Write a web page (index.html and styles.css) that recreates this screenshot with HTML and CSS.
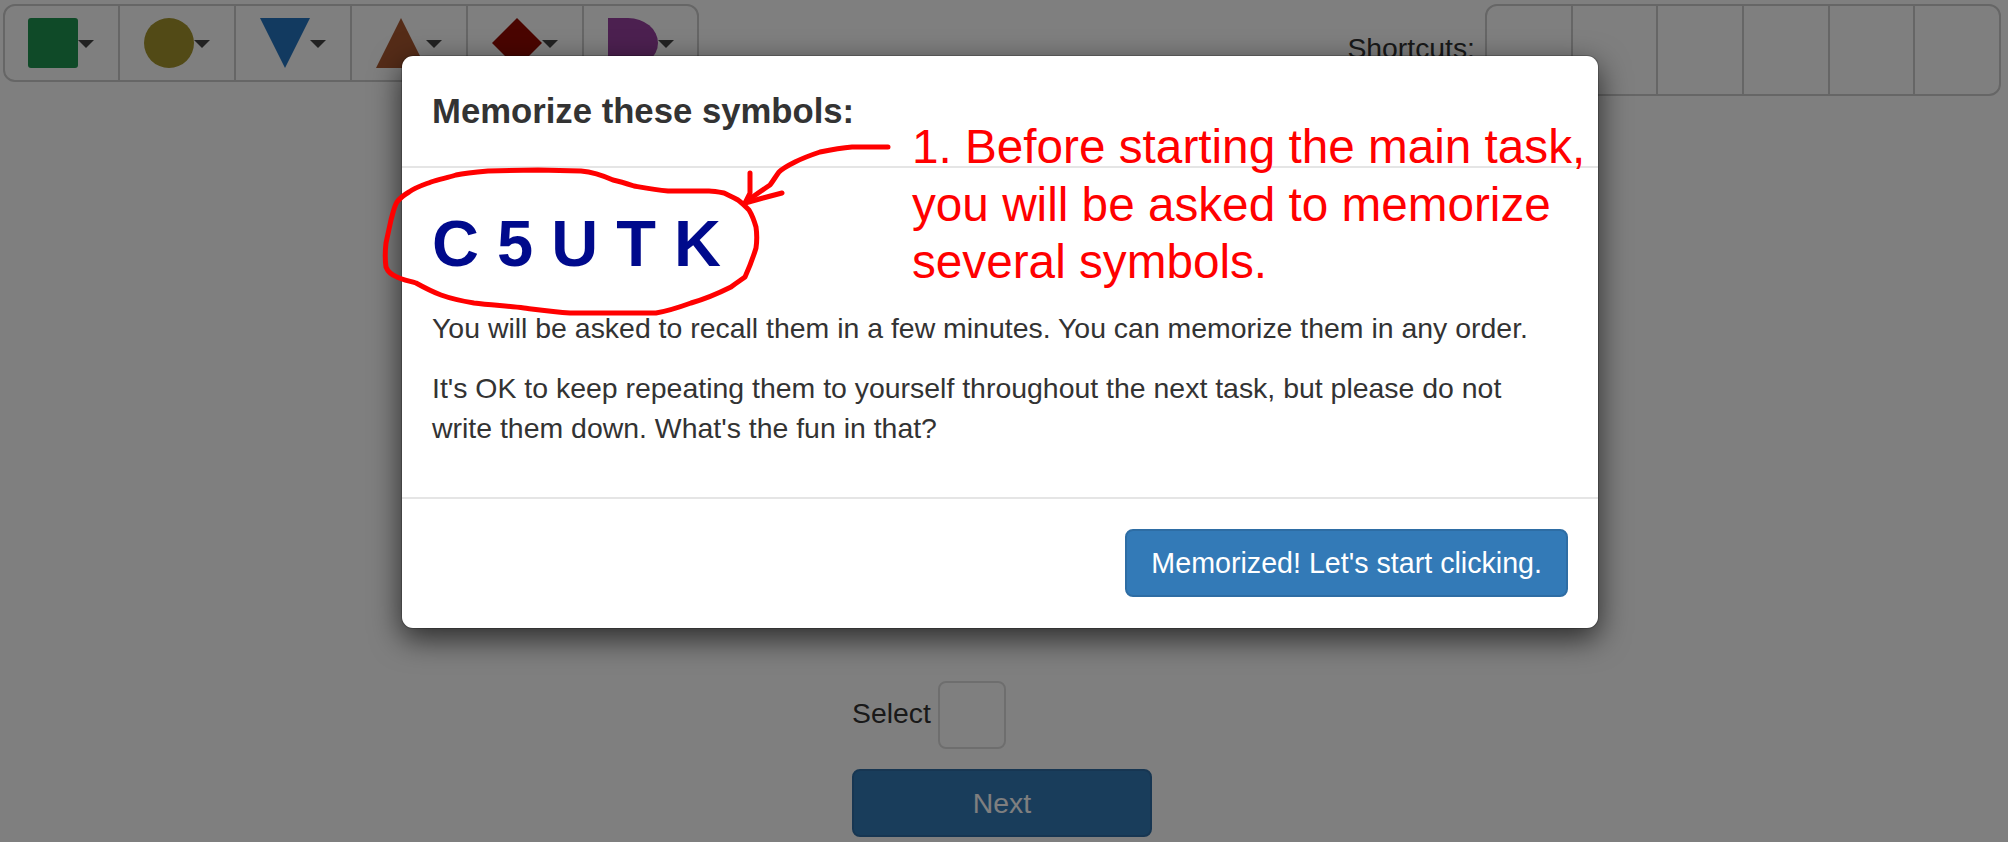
FILE: index.html
```html
<!DOCTYPE html>
<html lang="en">
<head>
<meta charset="utf-8">
<title>Memorize these symbols</title>
<link rel="stylesheet" href="styles.css">
</head>
<body>
<div class="page">
  <header class="top">
    <div class="toolbar">
      <div class="tool"><svg class="shape" viewBox="0 0 50 50"><rect width="50" height="50" rx="3" fill="#1e9450"/></svg><span class="caret"></span></div>
      <div class="tool"><svg class="shape" viewBox="0 0 50 50"><ellipse cx="25" cy="25" rx="25" ry="25" fill="#a4942c"/></svg><span class="caret"></span></div>
      <div class="tool"><svg class="shape" viewBox="0 0 50 50"><polygon points="0,0 50,0 25,50" fill="#2474c0"/></svg><span class="caret"></span></div>
      <div class="tool"><svg class="shape" viewBox="0 0 50 50"><polygon points="25,0 50,50 0,50" fill="#aa5830"/></svg><span class="caret"></span></div>
      <div class="tool"><svg class="shape" viewBox="0 0 50 50"><polygon points="25,0 50,25 25,50 0,25" fill="#940a00"/></svg><span class="caret"></span></div>
      <div class="tool"><svg class="shape" viewBox="0 0 50 50"><path d="M0 0H20A30 25 0 0 1 20 50H0Z" fill="#9840a0"/></svg><span class="caret"></span></div>
    </div>
    <div class="shortcuts">
      <span class="shortcuts-label">Shortcuts:</span>
      <div class="shortcut-box">
        <div class="shortcut"></div><div class="shortcut"></div><div class="shortcut"></div>
        <div class="shortcut"></div><div class="shortcut"></div><div class="shortcut"></div>
      </div>
    </div>
  </header>
  <main class="main">
    <div class="select-row"><span class="select-label">Select</span><div class="select-box"></div></div>
    <button class="btn btn-next" type="button">Next</button>
  </main>
</div>

<div class="backdrop"></div>

<section class="modal">
  <div class="modal-header"><h4 class="modal-title">Memorize these symbols:</h4></div>
  <div class="modal-body">
    <div class="symbols">C 5 U T K</div>
    <p>You will be asked to recall them in a few minutes. You can memorize them in any order.</p>
    <p>It's OK to keep repeating them to yourself throughout the next task, but please do not write them down. What's the fun in that?</p>
  </div>
  <div class="modal-footer"><button class="btn btn-primary" type="button">Memorized! Let's start clicking.</button></div>
</section>

<svg class="scribble" viewBox="0 0 2008 842" width="2008" height="842">
  <path d="M668 191C655 190 645 188 634 186C625 183 618 181 613 180C604 176 592 172 581 171L538 170L488 171C476 172 465 173 456 175C447 178 439 179 431 182C423 185 416 187 409 192C404 195 400 198 397 202C394 207 393 213 391 220L386 243C385 252 385 260 386 267C388 272 392 275 397 277C403 280 410 281 416 283C425 288 433 292 441 295C452 299 462 301 474 303C490 305 507 306 524 308C540 310 555 312 570 313L656 313C668 311 680 307 691 303C705 299 719 293 731 287C736 283 741 280 745 277C749 268 753 258 756 248C757 241 757 234 756 227C754 220 752 215 749 210C745 206 742 203 738 200C733 197 728 195 724 193C719 192 714 191 709 191Z"/>
  <path d="M888 147L852 147C841 148 830 150 820 152C811 155 803 158 795 162C789 165 783 168 779 172C776 176 773 181 770 185C761 191 752 197 745 203"/>
  <path d="M750 173L750 193L745 203L763 198L782 193"/>
</svg>

<p class="annotation">1. Before starting the main task,<br>you will be asked to memorize<br>several symbols.</p>
</body>
</html>
```

FILE: styles.css
```css
* { box-sizing: border-box; }

html, body {
  margin: 0;
  height: 842px;
  overflow: hidden;
  background: #fff;
}

body {
  font-family: "Liberation Sans", Arial, sans-serif;
  font-size: 28.35px;
  line-height: 40px;
  color: #333;
}

.top {
  display: flex;
  justify-content: space-between;
  align-items: flex-start;
  padding: 4px 7px 0 3px;
}

.toolbar {
  display: flex;
  height: 78px;
  border: 2px solid #ccc;
  border-radius: 12px;
}

.tool {
  width: 116px;
  display: flex;
  align-items: flex-start;
  padding: 12px 0 0 24px;
  border-left: 2px solid #ccc;
}

.tool:first-child {
  width: 113px;
  padding-left: 23px;
  border-left: 0;
}

.tool:last-child { width: 115px; }

.shape {
  width: 50px;
  height: 50px;
  flex: none;
}

.caret {
  width: 0;
  height: 0;
  margin-top: 22px;
  border-left: 8px solid transparent;
  border-right: 8px solid transparent;
  border-top: 8px solid #444;
}

.shortcuts {
  display: flex;
  align-items: flex-start;
  gap: 10px;
}

.shortcuts-label {
  margin-top: 24px;
}

.shortcut-box {
  display: flex;
  width: 516px;
  height: 92px;
  border: 2px solid #ccc;
  border-radius: 12px;
}

.shortcut {
  flex: 1;
  border-left: 2px solid #ccc;
}

.shortcut:first-child { border-left: 0; }

.main {
  display: flex;
  flex-direction: column;
  align-items: center;
  margin-top: 585px;
  padding-right: 4px;
}

.select-row {
  width: 300px;
  display: flex;
  align-items: center;
  gap: 7px;
}

.select-label {
  padding-bottom: 4px;
}

.select-box {
  width: 68px;
  height: 68px;
  border: 2px solid #ddd;
  border-radius: 8px;
}

.btn {
  height: 68px;
  padding: 12px 24px;
  border: 2px solid transparent;
  border-radius: 8px;
  font: inherit;
  color: #fff;
}

.btn-next {
  width: 300px;
  margin-top: 20px;
  background: #337ab7;
  border-color: #2e6da4;
}

.btn-primary {
  font-size: 28.65px;
  background: #337ab7;
  border-color: #2e6da4;
}

.backdrop {
  position: absolute;
  inset: 0;
  background: rgba(0, 0, 0, 0.5);
}

.modal {
  position: absolute;
  top: 55px;
  left: 401px;
  width: 1198px;
  background: #fff;
  border: 1px solid rgba(0, 0, 0, 0.2);
  border-radius: 12px;
  box-shadow: 0 10px 30px rgba(0, 0, 0, 0.65);
  background-clip: padding-box;
}

.modal-header {
  padding: 30px;
  border-bottom: 2px solid #e5e5e5;
}

.modal-title {
  margin: 0;
  font-size: 34.7px;
  line-height: 50px;
  font-weight: 700;
}

.modal-body {
  padding: 30px 30px 29px;
}

.modal-body p {
  max-width: 1100px;
  margin: 0 0 20px;
  font-size: 28.45px;
}

.symbols {
  height: 92px;
  margin-bottom: 18px;
  font-size: 65px;
  line-height: 92px;
  font-weight: 700;
  color: #000a8c;
}

.modal-footer {
  display: flex;
  justify-content: flex-end;
  padding: 30px 30px 31px;
  border-top: 2px solid #e5e5e5;
}

.scribble {
  position: absolute;
  top: 0;
  left: 0;
  fill: none;
  stroke: #f00;
  stroke-width: 5;
  stroke-linecap: round;
  stroke-linejoin: round;
  pointer-events: none;
}

.annotation {
  position: absolute;
  top: 118px;
  left: 912px;
  margin: 0;
  font-size: 47.7px;
  line-height: 57.6px;
  color: #f00;
  white-space: nowrap;
}
```
